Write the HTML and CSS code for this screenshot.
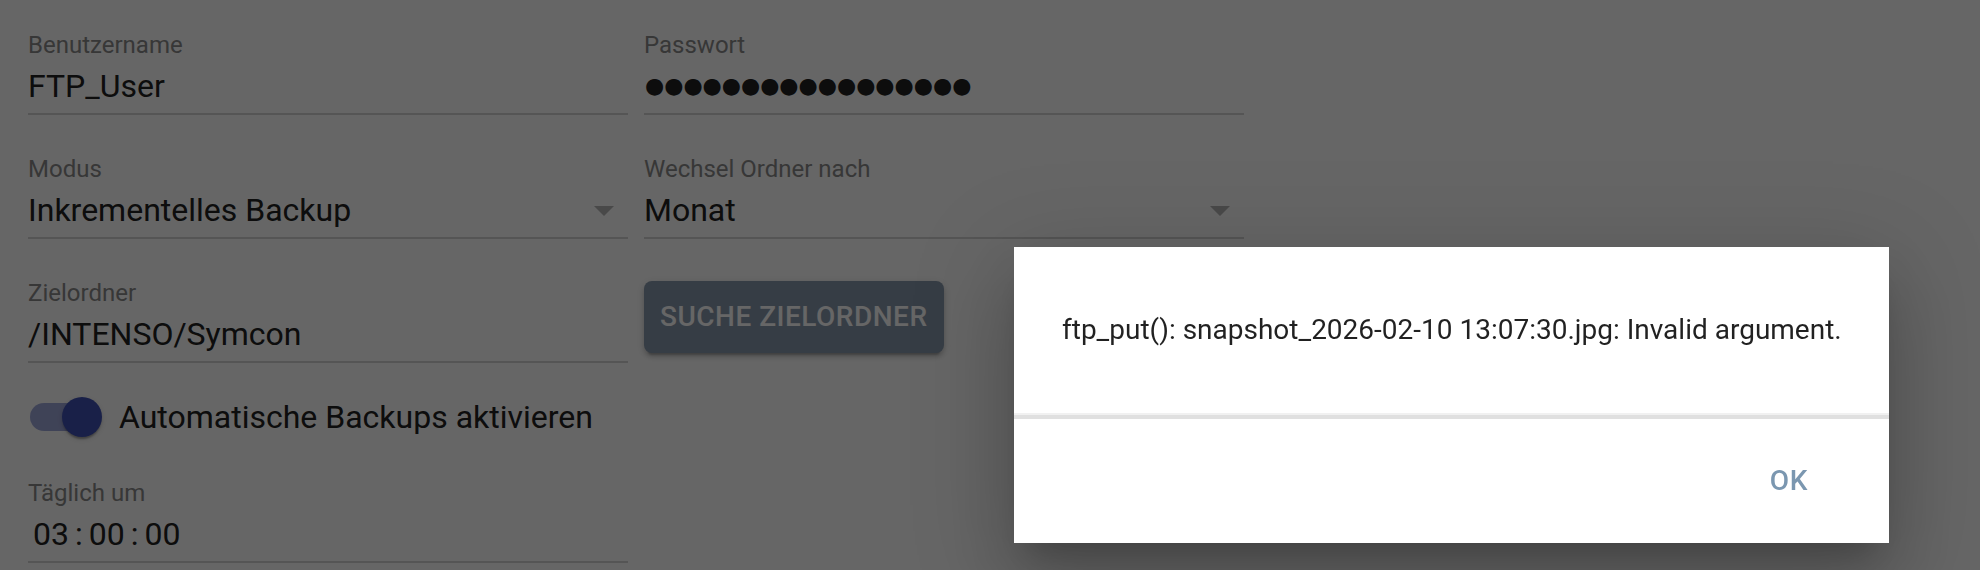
FILE: index.html
```html
<!DOCTYPE html>
<html lang="de">
<head>
<meta charset="utf-8">
<title>Backup</title>
<link rel="stylesheet" href="styles.css">
</head>
<body>
<main class="form">
  <div class="grid">
    <div class="field">
      <div class="label">Benutzername</div>
      <div class="value">FTP_User</div>
    </div>
    <div class="field">
      <div class="label">Passwort</div>
      <div class="value password">●●●●●●●●●●●●●●●●●</div>
    </div>
    <div class="field">
      <div class="label">Modus</div>
      <div class="value select">
        <span>Inkrementelles Backup</span>
        <svg class="arrow" viewBox="0 0 24 24" width="48" height="48"><path d="M7 10l5 5 5-5z"/></svg>
      </div>
    </div>
    <div class="field">
      <div class="label">Wechsel Ordner nach</div>
      <div class="value select">
        <span>Monat</span>
        <svg class="arrow" viewBox="0 0 24 24" width="48" height="48"><path d="M7 10l5 5 5-5z"/></svg>
      </div>
    </div>
    <div class="field">
      <div class="label">Zielordner</div>
      <div class="value">/INTENSO/Symcon</div>
    </div>
    <div class="cell-button">
      <button class="btn-contained" type="button">SUCHE ZIELORDNER</button>
    </div>
  </div>

  <label class="switch-row">
    <span class="switch">
      <span class="track"></span>
      <span class="thumb"></span>
    </span>
    <span class="switch-label">Automatische Backups aktivieren</span>
  </label>

  <div class="field time-field">
    <div class="label">Täglich um</div>
    <div class="value time"><span>03</span><span>:</span><span>00</span><span>:</span><span>00</span></div>
  </div>
</main>

<div class="backdrop"></div>
<div class="dialog" role="dialog">
  <div class="dialog-content">ftp_put(): snapshot_2026-02-10 13:07:30.jpg: Invalid argument.</div>
  <div class="dialog-actions">
    <button class="btn-text" type="button">OK</button>
  </div>
</div>
</body>
</html>
```

FILE: styles.css
```css
html, body {
  margin: 0;
  padding: 0;
  background: #ffffff;
  width: 1980px;
  height: 570px;
  overflow: hidden;
  font-family: Roboto, "Liberation Sans", sans-serif;
}

.form {
  padding: 31px 0 0 28px;
}

.grid {
  display: grid;
  grid-template-columns: 600px 600px;
  column-gap: 16px;
  row-gap: 40px;
  align-items: start;
}

.field {
  width: 600px;
}

.label {
  font-size: 24px;
  line-height: 28px;
  color: #8a8a8a;
  margin-bottom: 8px;
  white-space: nowrap;
}

.value {
  font-size: 32px;
  line-height: 38px;
  height: 38px;
  color: #212121;
  padding-bottom: 8px;
  border-bottom: 2px solid #d4d4d4;
  white-space: nowrap;
}

.password {
  font-family: "DejaVu Sans", sans-serif;
  font-size: 22px;
  letter-spacing: 0;
  padding-left: 1px;
  overflow: hidden;
}

.select {
  display: flex;
  align-items: center;
  justify-content: space-between;
}

.arrow {
  fill: #b6b6b6;
  margin: -5px 0 -5px 0;
}

.cell-button {
  padding-top: 2px;
}

.btn-contained {
  font-family: Roboto, "Liberation Sans", sans-serif;
  font-weight: 500;
  font-size: 28px;
  line-height: 48px;
  letter-spacing: 0.5px;
  color: #ffffff;
  background: #8798ac;
  border: none;
  border-radius: 8px;
  padding: 12px 16px;
  margin: 0;
  box-shadow: 0 6px 2px -4px rgba(0,0,0,0.2), 0 4px 4px 0 rgba(0,0,0,0.14), 0 2px 10px 0 rgba(0,0,0,0.12);
}

.switch-row {
  display: flex;
  align-items: center;
  height: 76px;
  margin: 16px 0 0 -22px;
}

.switch {
  position: relative;
  width: 113px;
  height: 76px;
  flex: none;
}

.track {
  position: absolute;
  left: 24px;
  top: 24px;
  width: 68px;
  height: 28px;
  border-radius: 14px;
  background: #3f51b5;
  opacity: 0.5;
}

.thumb {
  position: absolute;
  left: 56px;
  top: 18px;
  width: 40px;
  height: 40px;
  border-radius: 50%;
  background: #3f51b5;
  box-shadow: 0 4px 2px -2px rgba(0,0,0,0.2), 0 2px 2px 0 rgba(0,0,0,0.14), 0 2px 6px 0 rgba(0,0,0,0.12);
}

.switch-label {
  font-size: 32px;
  color: #212121;
  white-space: nowrap;
}

.time-field {
  margin-top: 24px;
}

.time {
  display: flex;
  gap: 6px;
  padding-left: 5px;
}

.backdrop {
  position: fixed;
  inset: 0;
  background: rgba(0,0,0,0.6);
}

.dialog {
  position: absolute;
  left: 1014px;
  top: 247px;
  width: 875px;
  height: 296px;
  background: #ffffff;
  display: flex;
  flex-direction: column;
  box-shadow: 0 22px 30px -14px rgba(0,0,0,0.2), 0 48px 76px 6px rgba(0,0,0,0.14), 0 18px 92px 16px rgba(0,0,0,0.12);
}

.dialog-content {
  height: 168px;
  display: flex;
  align-items: center;
  padding: 0 48px;
  font-size: 28px;
  line-height: 40px;
  color: rgba(0,0,0,0.87);
  border-bottom: 2px solid #f1f1f1;
  box-sizing: border-box;
  white-space: nowrap;
}

.dialog-actions {
  flex: 1;
  border-top: 4px solid #e0e0e0;
  display: flex;
  justify-content: flex-end;
  align-items: center;
  padding-right: 36px;
}

.btn-text {
  font-family: Roboto, "Liberation Sans", sans-serif;
  font-weight: 500;
  font-size: 28px;
  line-height: 48px;
  letter-spacing: 0.8px;
  color: #7b97b0;
  background: transparent;
  border: none;
  min-width: 128px;
  padding: 12px 16px;
  margin: 0;
  text-align: center;
}
```
